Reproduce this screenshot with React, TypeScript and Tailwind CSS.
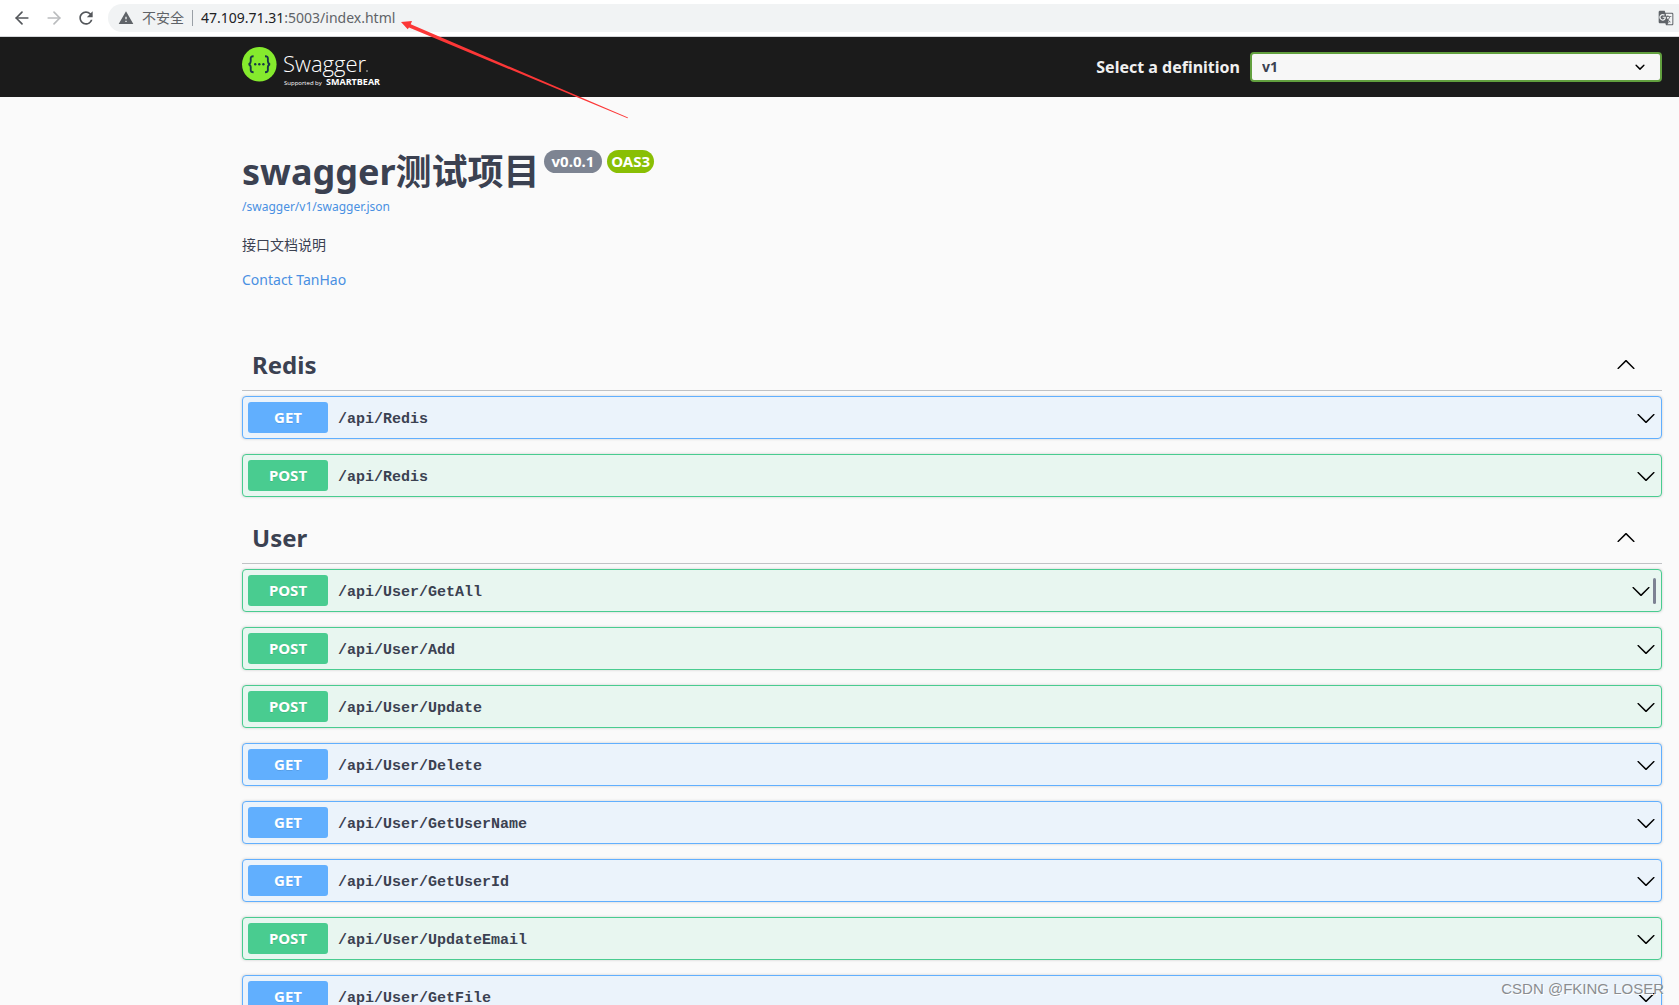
import { ArrowLeft, ArrowRight } from "lucide-react";
import { MdGTranslate, MdRefresh, MdWarning } from "react-icons/md";

type Method = "GET" | "POST";

type Operation = {
  method: Method;
  path: string;
  copyable?: boolean;
};

const sections: { tag: string; operations: Operation[] }[] = [
  {
    tag: "Redis",
    operations: [
      { method: "GET", path: "/api/Redis" },
      { method: "POST", path: "/api/Redis" },
    ],
  },
  {
    tag: "User",
    operations: [
      { method: "POST", path: "/api/User/GetAll", copyable: true },
      { method: "POST", path: "/api/User/Add" },
      { method: "POST", path: "/api/User/Update" },
      { method: "GET", path: "/api/User/Delete" },
      { method: "GET", path: "/api/User/GetUserName" },
      { method: "GET", path: "/api/User/GetUserId" },
      { method: "POST", path: "/api/User/UpdateEmail" },
      { method: "GET", path: "/api/User/GetFile" },
    ],
  },
];

function rowClass(method: Method) {
  if (method === "GET") return "border-[#61affe] bg-[#ebf3fb]";
  return "border-[#49cc90] bg-[#e8f6f0]";
}

function badgeClass(method: Method) {
  if (method === "GET") return "bg-[#61affe]";
  return "bg-[#49cc90]";
}

function Chevron({ up = false }: { up?: boolean }) {
  return (
    <svg viewBox="0 0 20 20" className={`size-5 shrink-0 ${up ? "rotate-180" : ""}`} fill="#000">
      <path d="M17.418 6.109c.272-.268.709-.268.979 0s.271.701 0 .969l-7.908 7.83c-.27.268-.707.268-.979 0l-7.908-7.83c-.27-.268-.27-.701 0-.969.271-.268.709-.268.979 0L10 13.25l7.418-7.141z" />
    </svg>
  );
}

function BrowserBar() {
  return (
    <div className="flex h-[37px] shrink-0 items-center border-b border-[#d5d7da] bg-white pl-3">
      <button aria-label="Back" className="mr-3 text-[#54575b]">
        <ArrowLeft className="size-5" />
      </button>
      <button aria-label="Forward" className="mr-3 text-[#babcbe]">
        <ArrowRight className="size-5" />
      </button>
      <button aria-label="Reload" className="mr-3 text-[#54575b]">
        <MdRefresh className="size-5" />
      </button>
      <div className="flex h-7 flex-1 items-center rounded-l-full bg-[#f1f3f4] pr-[5px] pl-2.5 text-sm leading-5 text-[#5f6368]">
        <MdWarning className="size-4" />
        <span className="ml-2">不安全</span>
        <span className="mx-2 h-4 w-px bg-[#9aa0a6]" />
        <span>
          <span className="text-[#202124]">47.109.71.31</span>:5003/index.html
        </span>
        <button aria-label="Translate" className="ml-auto">
          <MdGTranslate className="size-4" />
        </button>
      </div>
    </div>
  );
}

function Logo() {
  return (
    <svg viewBox="0 0 150 40" className="h-10 w-[150px]" role="img" aria-label="Swagger">
      <circle cx="17.3" cy="17.3" r="17.3" fill="#85ea2d" />
      <g fill="none" stroke="#173647" strokeWidth="1.9">
        <path d="M11.6 9.2c-2.4 0-3 .9-2.9 2.8.3 2.8.1 4.7-2.1 5.2 2.2.5 2.4 2.4 2.1 5.2-.1 1.9.5 2.8 2.9 2.8" />
        <path d="M23 9.2c2.4 0 3 .9 2.9 2.8-.3 2.8-.1 4.7 2.1 5.2-2.2.5-2.4 2.4-2.1 5.2.1 1.9-.5 2.8-2.9 2.8" />
      </g>
      <g fill="#173647">
        <circle cx="13.2" cy="17.2" r="1.2" />
        <circle cx="17.3" cy="17.2" r="1.2" />
        <circle cx="21.4" cy="17.2" r="1.2" />
      </g>
      <g fill="#fff" fontFamily="'Open Sans', sans-serif">
        <text x="41" y="25" fontSize="22" fontWeight="300">
          Swagger
        </text>
        <text x="42" y="38" fontSize="6">
          Supported by
        </text>
        <text x="84" y="38" fontSize="9" fontWeight="700">
          SMARTBEAR
        </text>
      </g>
      <circle cx="125" cy="24" r=".7" fill="#fff" />
    </svg>
  );
}

function TopBar() {
  return (
    <header className="flex h-[60px] shrink-0 items-center justify-between bg-[#1b1b1b] pr-[17px] pl-[242px]">
      <a href="#">
        <Logo />
      </a>
      <div className="flex items-center gap-2.5">
        <label htmlFor="definition" className="text-base font-bold text-[#f0f0f0]">
          Select a definition
        </label>
        <div className="relative">
          <select
            id="definition"
            className="block h-[30px] w-[412px] appearance-none rounded border-2 border-[#62a03f] bg-[#f7f7f7] px-2.5 text-sm leading-5 font-bold text-[#3b4151]"
          >
            <option>v1</option>
          </select>
          <svg viewBox="0 0 20 20" className="pointer-events-none absolute top-[5px] right-3 size-5">
            <path d="M13.418 7.859a.695.695 0 01.978 0 .68.68 0 010 .969l-3.908 3.83a.697.697 0 01-.979 0l-3.908-3.83a.68.68 0 010-.969.695.695 0 01.978 0L10 11l3.418-3.141z" />
          </svg>
        </div>
      </div>
    </header>
  );
}

function Info() {
  return (
    <section className="flex flex-col items-start pt-[50px]">
      <div className="flex items-start">
        <h1 className="text-4xl leading-[50px] font-bold">swagger测试项目</h1>
        <span className="mt-[3px] ml-1 rounded-full bg-[#7d8492] px-2 text-[15px] leading-[23px] font-bold text-white">
          v0.0.1
        </span>
        <span className="mt-[3px] ml-[5px] rounded-full bg-[#89bf04] px-1 text-[15px] leading-[23px] font-bold text-white">
          OAS3
        </span>
      </div>
      <a href="#" className="text-xs leading-5 text-[#4990e2]">
        /swagger/v1/swagger.json
      </a>
      <p className="mt-[18px] text-sm leading-5">接口文档说明</p>
      <a href="#" className="mt-[15px] text-sm leading-5 text-[#4990e2]">
        Contact TanHao
      </a>
    </section>
  );
}

function OperationRow({ method, path, copyable }: Operation) {
  return (
    <div
      className={`flex h-[43px] items-center rounded border px-[5px] shadow-[0_0_3px_rgba(0,0,0,0.19)] ${rowClass(method)}`}
    >
      <span
        className={`w-20 rounded-[3px] text-center text-[15px] leading-[31px] font-bold text-white [text-shadow:0_1px_0_rgba(0,0,0,0.1)] ${badgeClass(method)}`}
      >
        {method}
      </span>
      <a
        href="#"
        className="flex-1 px-2.5 pt-1 font-['Liberation_Mono',monospace] text-[15px] leading-5 font-bold"
      >
        {path}
      </a>
      <button aria-label={`Expand ${path}`}>
        <Chevron />
      </button>
      {copyable && (
        <button aria-label="Copy path" className="ml-0.5 h-[26px] w-[3px] rounded-sm bg-[#7d8293]" />
      )}
    </div>
  );
}

export default function App() {
  return (
    <div className="relative flex h-screen flex-col overflow-hidden bg-[#fafafa] font-['Noto_Sans','Noto_Sans_CJK_SC',sans-serif] text-[#3b4151]">
      <BrowserBar />
      <TopBar />
      <main className="min-h-0 flex-1 overflow-hidden pr-[17px] pl-[242px]">
        <Info />
        <div className="mt-[49px]">
          {sections.map(({ tag, operations }) => (
            <section key={tag}>
              <div className="mb-[5px] flex h-[52px] items-center justify-between border-b border-[#c0c2c5] pr-[26px] pl-2.5">
                <h3 className="text-2xl font-bold">{tag}</h3>
                <button aria-label={`Collapse ${tag}`}>
                  <Chevron up />
                </button>
              </div>
              <div className="flex flex-col gap-[15px] pb-[15px]">
                {operations.map((op) => (
                  <OperationRow key={`${op.method}-${op.path}`} {...op} />
                ))}
              </div>
            </section>
          ))}
        </div>
      </main>

      {/* hand-drawn pointer towards the address */}
      <svg
        viewBox="0 0 230 100"
        className="pointer-events-none absolute top-5 left-[400px] h-[100px] w-[230px]"
        fill="#fc3737"
      >
        <path d="M1 2 12 1l-1.300 3.300L228 97.500 227.600 98.300 9 7.400 7.700 9.300z" />
      </svg>
      <div className="pointer-events-none absolute right-[15px] bottom-1 font-['Liberation_Sans',sans-serif] text-[15px] leading-6 text-[#8a8d91] [text-shadow:1px_1px_0_#fff]">
        CSDN @FKING LOSER
      </div>
    </div>
  );
}
